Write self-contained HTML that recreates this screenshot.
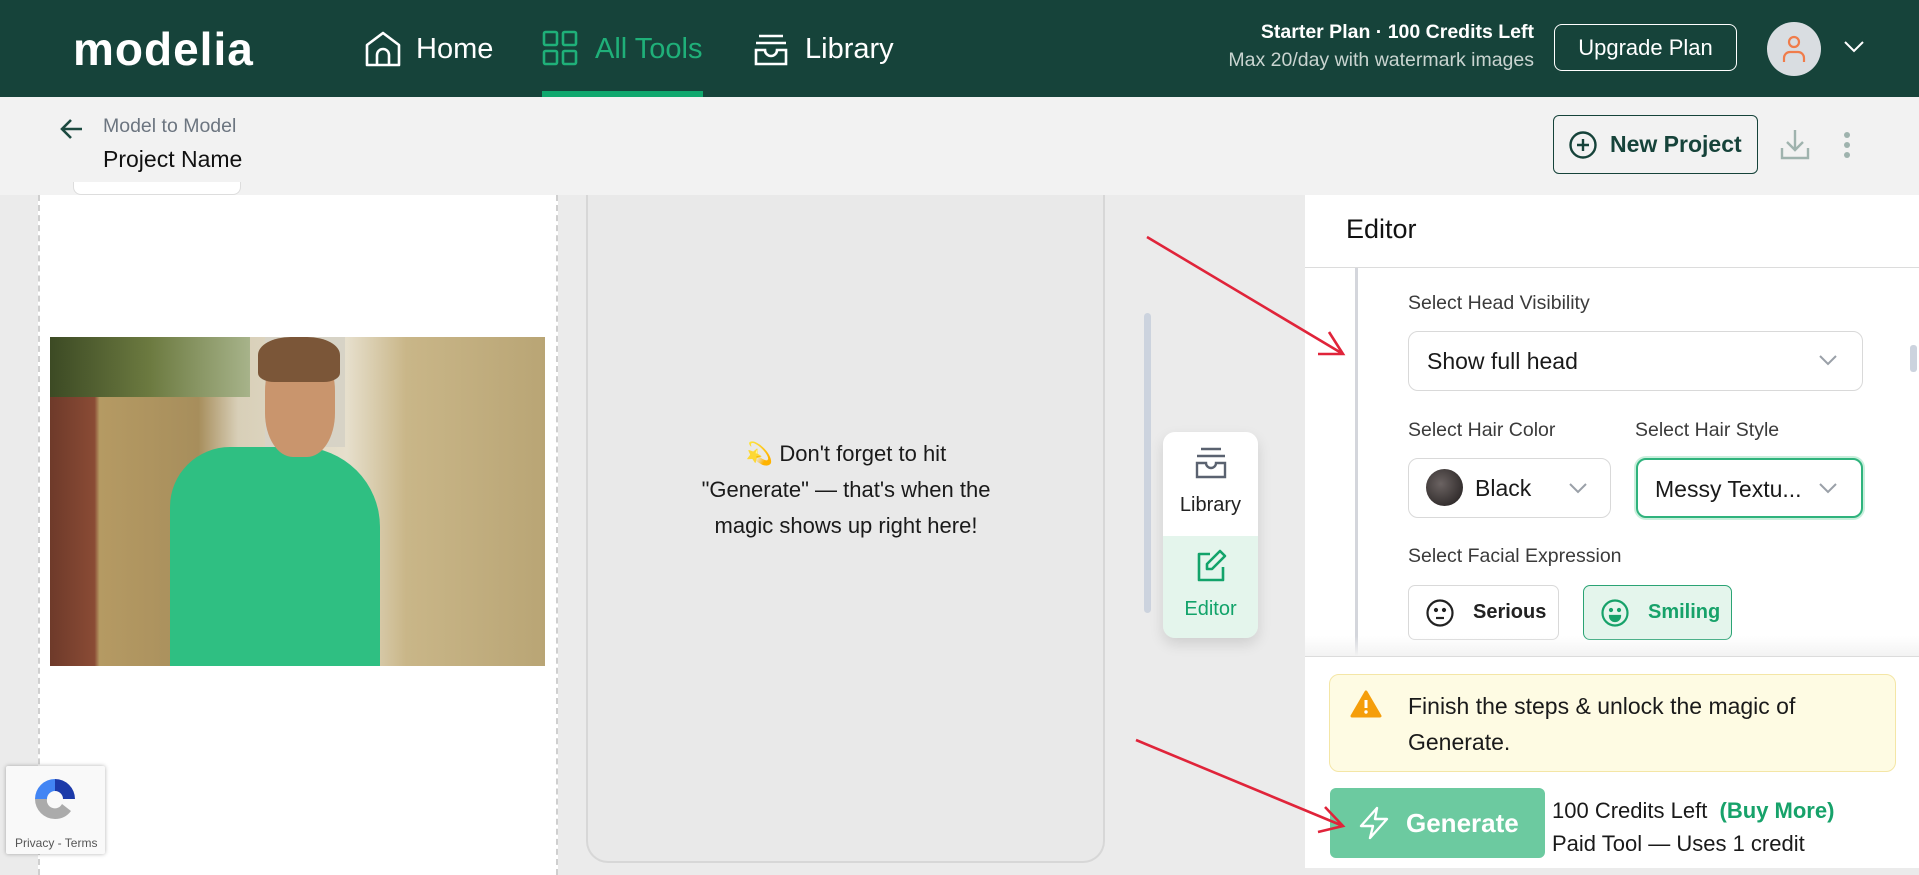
<!DOCTYPE html>
<html><head><meta charset="utf-8">
<style>
*{box-sizing:border-box;margin:0;padding:0}
body{width:1919px;height:868px;overflow:hidden;background:#ebebeb;font-family:"Liberation Sans",sans-serif;position:relative;color:#1a1a1a}
.abs{position:absolute}
.hdr{left:0;top:0;width:1919px;height:97px;background:#16433a}
.nav{color:#fff;font-size:29px;top:33px}
.sub{left:0;top:97px;width:1919px;height:98px;background:#f2f2f2}
.lbl{font-size:19.5px;color:#3b3b3b;left:1408px}
.sel{border:1px solid #d9d9d9;border-radius:10px;background:#fff;font-size:23px;color:#1a1a1a}
</style></head><body>
<!-- left panel -->
<div class="abs" style="left:38px;top:195px;width:520px;height:680px;background:#fff;border-left:2px dashed #cfcfcf;border-right:2px dashed #cfcfcf"></div>
<!-- middle panel -->
<div class="abs" style="left:586px;top:170px;width:519px;height:693px;background:#e9e9e9;border:2px solid #d7d7d7;border-top:none;border-radius:0 0 22px 22px"></div>
<!-- header -->
<div class="abs hdr"></div>
<div class="abs" style="left:73px;top:22px;color:#fff;font-size:46px;font-weight:bold;letter-spacing:1px;font-family:'Liberation Sans',sans-serif;">modelia</div>
<svg class="abs" style="left:363px;top:31px" width="40" height="36" viewBox="0 0 40 36" fill="none" stroke="#fff" stroke-width="2.6" stroke-linejoin="round"><path d="M4 34V14L20 2 36 14v20z"/><path d="M14 34V24a6 6 0 0 1 12 0v10"/></svg>
<div class="abs nav" style="left:416px">Home</div>
<svg class="abs" style="left:542px;top:30px" width="36" height="36" viewBox="0 0 36 36" fill="none" stroke="#1fb079" stroke-width="2.6"><rect x="2" y="2" width="13" height="13" rx="1.5"/><rect x="21" y="2" width="13" height="13" rx="1.5"/><rect x="2" y="21" width="13" height="13" rx="1.5"/><rect x="21" y="21" width="13" height="13" rx="1.5"/></svg>
<div class="abs nav" style="left:595px;color:#1fb079">All Tools</div>
<div class="abs" style="left:542px;top:91px;width:161px;height:6px;background:#10a86e"></div>
<svg class="abs" style="left:753px;top:34px" width="36" height="32" viewBox="0 0 36 32" fill="none" stroke="#fff" stroke-width="2.6"><path d="M6 2h24M3 9h30"/><path d="M3 16h9a6 6 0 0 0 12 0h9v14H3z"/></svg>
<div class="abs nav" style="left:805px">Library</div>
<div class="abs" style="right:385px;top:21px;color:#fff;font-size:19.5px;font-weight:bold;text-align:right;white-space:nowrap">Starter Plan · 100 Credits Left</div>
<div class="abs" style="right:385px;top:49px;color:#c9d4d0;font-size:19.5px;text-align:right;white-space:nowrap">Max 20/day with watermark images</div>
<div class="abs" style="left:1554px;top:24px;width:183px;height:47px;border:1.5px solid #fff;border-radius:8px;color:#fff;font-size:22px;display:flex;align-items:center;justify-content:center">Upgrade Plan</div>
<div class="abs" style="left:1767px;top:22px;width:54px;height:54px;border-radius:50%;background:#d9dde1"></div>
<svg class="abs" style="left:1781px;top:34px" width="26" height="30" viewBox="0 0 26 30" fill="none" stroke="#f07c4a" stroke-width="2.2"><circle cx="13" cy="8" r="5"/><path d="M3 28v-4a6 6 0 0 1 6-6h8a6 6 0 0 1 6 6v4"/></svg>
<svg class="abs" style="left:1843px;top:40px" width="22" height="14" viewBox="0 0 22 14" fill="none" stroke="#fff" stroke-width="2"><path d="M2 2l9 9 9-9"/></svg>
<!-- subheader -->
<div class="abs sub"></div>
<div class="abs" style="left:73px;top:182px;width:168px;height:13px;border:1px solid #ddd;border-top:none;border-radius:0 0 8px 8px;background:#fff"></div>
<svg class="abs" style="left:60px;top:118px" width="24" height="22" viewBox="0 0 24 22" fill="none" stroke="#1c4a40" stroke-width="2.6"><path d="M22 11H3M11 2l-9 9 9 9"/></svg>
<div class="abs" style="left:103px;top:115px;font-size:19.5px;color:#6c7580">Model to Model</div>
<div class="abs" style="left:103px;top:146px;font-size:23px;color:#111">Project Name</div>
<div class="abs" style="left:1553px;top:115px;width:205px;height:59px;border:1.5px solid #16433a;border-radius:6px;display:flex;align-items:center;padding-left:14px;font-size:23px;color:#16433a;font-weight:bold"><svg width="30" height="30" viewBox="0 0 30 30" fill="none" stroke="#16433a" stroke-width="2.4" style="margin-right:12px"><circle cx="15" cy="15" r="12.5"/><path d="M15 9v12M9 15h12"/></svg>New Project</div>
<svg class="abs" style="left:1780px;top:128px" width="30" height="32" viewBox="0 0 30 32" fill="none" stroke="#9fb3ae" stroke-width="2.4"><path d="M15 2v20M7 14l8 8 8-8M2 20v10h26V20"/></svg>
<div class="abs" style="left:1844px;top:132px;width:6px;height:6px;border-radius:3px;background:#9fb3ae;box-shadow:0 10px 0 #9fb3ae,0 20px 0 #9fb3ae"></div>
<!-- photo -->
<div class="abs" style="left:50px;top:337px;width:495px;height:329px;overflow:hidden;background:linear-gradient(90deg,#6e3a2a 0,#8a4b35 9%,#b59a63 10%,#a78e5c 30%,#d8cfb8 38%,#e6dfcc 60%,#c9b688 72%,#b9a575 100%)">
 <div class="abs" style="left:0;top:0;width:200px;height:60px;background:linear-gradient(90deg,#3c4a24,#6c7a40,#a7b38a)"></div>
 <div class="abs" style="left:215px;top:0;width:80px;height:110px;background:#d7d3c6"></div>
 <div class="abs" style="left:120px;top:110px;width:210px;height:219px;background:#2fbf82;border-radius:60px 80px 0 0"></div>
 <div class="abs" style="left:215px;top:10px;width:70px;height:110px;border-radius:40%;background:#c9956d"></div>
 <div class="abs" style="left:208px;top:0;width:82px;height:45px;border-radius:40% 40% 20% 20%;background:#7b5638"></div>
</div>
<!-- recaptcha -->
<div class="abs" style="left:6px;top:766px;width:99px;height:88px;background:#f9f9f9;box-shadow:0 0 4px rgba(0,0,0,.3);border-radius:2px"></div>
<svg class="abs" style="left:30px;top:774px" width="50" height="50" viewBox="0 0 50 50"><path d="M25 5a20 20 0 0 1 20 20H33a8 8 0 0 0-8-8z" fill="#1c3aa9"/><path d="M25 5A20 20 0 0 0 5 25h12a8 8 0 0 1 8-8z" fill="#4285f4"/><path d="M5 25a20 20 0 0 0 20 20 20 20 0 0 0 16-8l-9-7a8 8 0 0 1-15-5z" fill="#ababab"/></svg>
<div class="abs" style="left:15px;top:836px;font-size:12px;color:#555">Privacy - Terms</div>
<div class="abs" style="left:590px;top:436px;width:512px;text-align:center;font-size:22px;line-height:36px;color:#1a1a1a"><span style="color:#f2b22e">💫</span> Don't forget to hit<br>"Generate" — that's when the<br>magic shows up right here!</div>
<div class="abs" style="left:1144px;top:313px;width:7px;height:300px;border-radius:4px;background:#ccd3de"></div>
<!-- lib/editor card -->
<div class="abs" style="left:1163px;top:432px;width:95px;height:206px;border-radius:12px;overflow:hidden;box-shadow:0 6px 14px rgba(0,0,0,.12)">
 <div style="height:104px;background:#fff;text-align:center;padding-top:14px;color:#222;font-size:20px">
  <svg width="36" height="34" viewBox="0 0 36 34" fill="none" stroke="#5a6270" stroke-width="2.4"><path d="M8 3h20M4 10h28"/><path d="M4 17h9a5 5 0 0 0 10 0h9v14H4z"/></svg><div style="margin-top:8px">Library</div></div>
 <div style="height:102px;background:#e4f5ec;text-align:center;padding-top:12px;color:#12a36a;font-size:20px">
  <svg width="36" height="36" viewBox="0 0 36 36" fill="none" stroke="#12a36a" stroke-width="2.6" stroke-linejoin="round"><path d="M17 6H6v26h24V19"/><path d="M27 3l5 5-13 13h-5v-5z"/></svg><div style="margin-top:8px">Editor</div></div>
</div>
<!-- right panel -->
<div class="abs" style="left:1305px;top:195px;width:614px;height:673px;background:#fff"></div>
<div class="abs" style="left:1346px;top:214px;font-size:27px;color:#111">Editor</div>
<div class="abs" style="left:1305px;top:267px;width:614px;height:1px;background:#dcdcdc"></div>
<div class="abs" style="left:1355px;top:268px;width:3px;height:389px;background:#d4d6dc"></div>
<div class="abs" style="left:1910px;top:345px;width:7px;height:27px;border-radius:3px;background:#ccd3de"></div>
<div class="abs lbl" style="top:292px">Select Head Visibility</div>
<div class="abs sel" style="left:1408px;top:331px;width:455px;height:60px;padding:16px 18px">Show full head</div>
<svg class="abs" style="left:1818px;top:354px" width="20" height="12" viewBox="0 0 20 12" fill="none" stroke="#9aa0a8" stroke-width="2"><path d="M2 2l8 8 8-8"/></svg>
<div class="abs lbl" style="top:419px">Select Hair Color</div>
<div class="abs lbl" style="top:419px;left:1635px">Select Hair Style</div>
<div class="abs sel" style="left:1408px;top:458px;width:203px;height:60px;padding:16px 0 0 66px">Black</div>
<div class="abs" style="left:1426px;top:469px;width:37px;height:37px;border-radius:50%;background:radial-gradient(circle at 40% 40%,#6b6362,#1e1a1a)"></div>
<svg class="abs" style="left:1568px;top:482px" width="20" height="12" viewBox="0 0 20 12" fill="none" stroke="#9aa0a8" stroke-width="2"><path d="M2 2l8 8 8-8"/></svg>
<div class="abs sel" style="left:1636px;top:458px;width:227px;height:60px;padding:16px 0 0 17px;border:2px solid #2fb37d;box-shadow:0 0 0 2px #c9efdc">Messy Textu...</div>
<svg class="abs" style="left:1818px;top:482px" width="20" height="12" viewBox="0 0 20 12" fill="none" stroke="#9aa0a8" stroke-width="2"><path d="M2 2l8 8 8-8"/></svg>
<div class="abs lbl" style="top:545px">Select Facial Expression</div>
<div class="abs" style="left:1408px;top:585px;width:151px;height:55px;border:1px solid #d9d9d9;border-radius:7px;background:#fff;display:flex;align-items:center;padding-left:16px;font-size:20px;font-weight:bold;color:#222"><svg width="30" height="30" viewBox="0 0 30 30" fill="none" stroke="#222" stroke-width="2.2" style="margin-right:18px"><circle cx="15" cy="15" r="12.5"/><circle cx="11" cy="12" r="1" fill="#222"/><circle cx="19" cy="12" r="1" fill="#222"/><path d="M11 20h8"/></svg>Serious</div>
<div class="abs" style="left:1583px;top:585px;width:149px;height:55px;border:1.5px solid #2aa374;border-radius:7px;background:#e4f5ec;display:flex;align-items:center;padding-left:16px;font-size:20px;font-weight:bold;color:#17a26a"><svg width="30" height="30" viewBox="0 0 30 30" fill="none" stroke="#17a26a" stroke-width="2.2" style="margin-right:18px"><circle cx="15" cy="15" r="12.5"/><circle cx="11" cy="12" r="1" fill="#17a26a"/><circle cx="19" cy="12" r="1" fill="#17a26a"/><path d="M10 18h10a5 5 0 0 1-10 0z" fill="#17a26a"/></svg>Smiling</div>
<div class="abs" style="left:1305px;top:636px;width:614px;height:20px;background:linear-gradient(#fff0,#f3f3f3)"></div>
<div class="abs" style="left:1305px;top:656px;width:614px;height:1px;background:#dcdcdc"></div>
<div class="abs" style="left:1329px;top:674px;width:567px;height:98px;background:#fefbe3;border:1.5px solid #f4e6a6;border-radius:10px"></div>
<svg class="abs" style="left:1350px;top:690px" width="32" height="28" viewBox="0 0 32 28"><path d="M16 2L30 26H2z" fill="#f59e0b" stroke="#f59e0b" stroke-width="3" stroke-linejoin="round"/><path d="M16 10v8" stroke="#fff" stroke-width="3"/><circle cx="16" cy="22" r="1.7" fill="#fff"/></svg>
<div class="abs" style="left:1408px;top:688px;font-size:23px;line-height:36px;color:#1a1a1a">Finish the steps &amp; unlock the magic of<br>Generate.</div>
<div class="abs" style="left:1330px;top:788px;width:215px;height:70px;background:#6ccaa0;border-radius:6px;display:flex;align-items:center;padding-left:28px;color:#fff;font-size:26px;font-weight:bold"><svg width="32" height="34" viewBox="0 0 32 34" fill="none" stroke="#fff" stroke-width="2.4" stroke-linejoin="round" style="margin-right:16px"><path d="M19 2L3 20h12l-3 12 17-19H17z"/></svg>Generate</div>
<div class="abs" style="left:1552px;top:794px;font-size:22px;color:#1a1a1a;line-height:33px;white-space:nowrap">100 Credits Left &nbsp;<b style="color:#17a26a">(Buy More)</b><br>Paid Tool — Uses 1 credit</div>
<!-- red arrows -->
<svg class="abs" style="left:0;top:0" width="1919" height="868"><g stroke="#e0243a" stroke-width="2.6" fill="none"><path d="M1147 237L1343 354M1318 354h25l-14-22"/><path d="M1136 740L1343 826M1318 832l25-6-18-19"/></g></svg>
</body></html>
